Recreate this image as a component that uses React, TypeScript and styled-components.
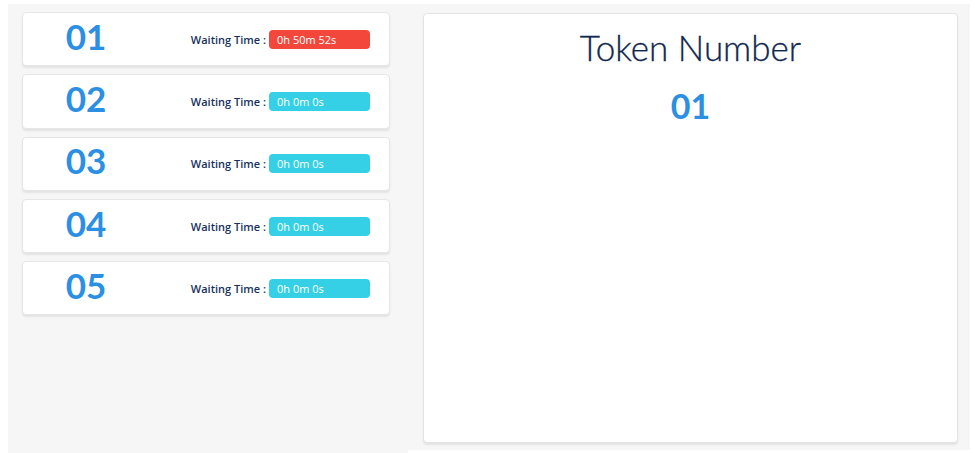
import React from "react";
import styled, { createGlobalStyle } from "styled-components";

const Global = createGlobalStyle`
  html, body { margin: 0; padding: 0; background: #ffffff; }
  body { font-family: "Open Sans", "Lato", sans-serif; }
`;

const Page = styled.div`
  display: flex;
  padding: 4px 5px 0 8px;
  height: 453px;
  box-sizing: border-box;
`;

const LeftPanel = styled.div`
  width: 400px;
  background: #f6f6f6;
  padding: 8px 18px 0 14px;
  box-sizing: border-box;
  display: flex;
  flex-direction: column;
  gap: 8px;
`;

const RightPanel = styled.div`
  flex: 1;
  background: #f6f6f6;
  padding: 9px 12px 7px 15px;
  box-sizing: border-box;
  display: flex;
  margin-bottom: 3px;
`;

const Card = styled.div`
  height: 54.3px;
  box-sizing: border-box;
  background: #fff;
  border: 1px solid #e6e6e6;
  border-radius: 4px;
  box-shadow: 0 2px 2px rgba(0, 0, 0, 0.08);
  display: grid;
  grid-template-columns: 126px 1fr;
  align-items: center;
`;

const Num = styled.div`
  text-align: center;
  font-family: "Lato", sans-serif;
  font-weight: 700;
  font-size: 35px;
  color: #2b8fe3;
  line-height: 1;
  margin-top: -6px;
`;

const WaitRow = styled.div`
  display: flex;
  justify-content: flex-end;
  align-items: center;
  padding-right: 19px;
  gap: 3px;
`;

const Label = styled.span`
  font-family: "Open Sans", sans-serif;
  font-weight: 600;
  font-size: 11px;
  color: #16325c;
`;

const Badge = styled.span<{ $alert?: boolean }>`
  width: 101px;
  height: 19px;
  border-radius: 4px;
  box-sizing: border-box;
  padding-left: 8px;
  display: flex;
  align-items: center;
  font-family: "Open Sans", sans-serif;
  font-size: 11px;
  color: #fff;
  background: ${(p) => (p.$alert ? "#f2473a" : "#35cfe6")};
`;

const TokenCard = styled.div`
  flex: 1;
  background: #fff;
  border: 1px solid #e3e3e3;
  border-radius: 4px;
  box-shadow: 0 2px 2px rgba(0, 0, 0, 0.08);
  display: flex;
  flex-direction: column;
  align-items: center;
`;

const Title = styled.div`
  margin-top: 12px;
  font-family: "Lato", sans-serif;
  font-weight: 300;
  font-size: 35px;
  color: #10284f;
  line-height: 1.2;
  -webkit-text-stroke: 0.3px #10284f;
`;

const Current = styled.div`
  margin-top: 21px;
  font-family: "Lato", sans-serif;
  font-weight: 700;
  font-size: 34px;
  color: #2b8fe3;
  line-height: 1;
`;

const tokens = [
  { n: "01", t: "0h 50m 52s", alert: true },
  { n: "02", t: "0h 0m 0s" },
  { n: "03", t: "0h 0m 0s" },
  { n: "04", t: "0h 0m 0s" },
  { n: "05", t: "0h 0m 0s" },
];

export default function App() {
  return (
    <>
      <Global />
      <Page>
        <LeftPanel>
          {tokens.map((k) => (
            <Card key={k.n}>
              <Num>{k.n}</Num>
              <WaitRow>
                <Label>Waiting Time :</Label>
                <Badge $alert={k.alert}>{k.t}</Badge>
              </WaitRow>
            </Card>
          ))}
        </LeftPanel>
        <RightPanel>
          <TokenCard>
            <Title>Token Number</Title>
            <Current>01</Current>
          </TokenCard>
        </RightPanel>
      </Page>
    </>
  );
}
